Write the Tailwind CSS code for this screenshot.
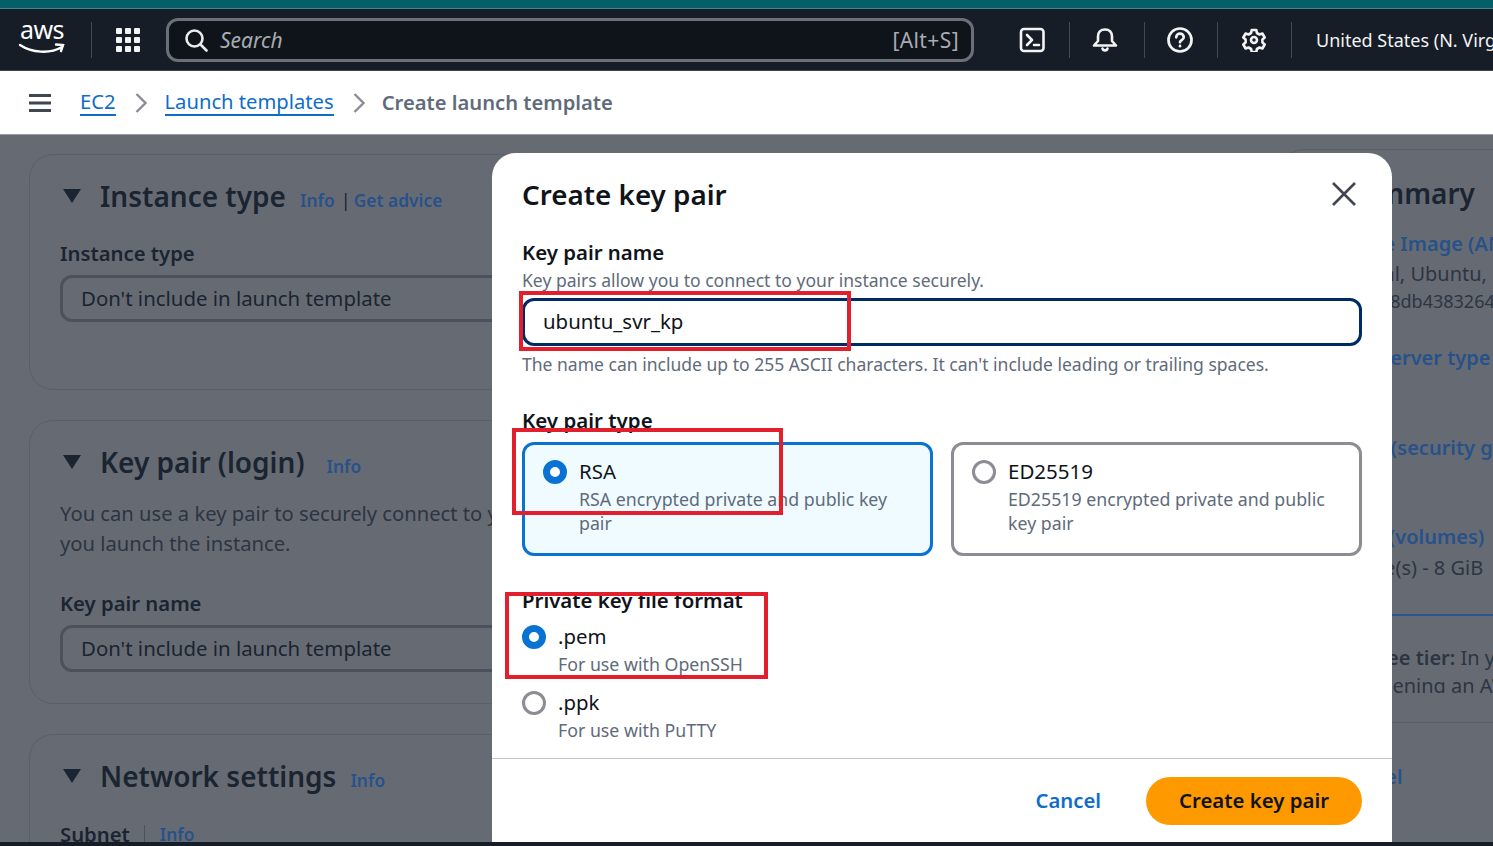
<!DOCTYPE html>
<html lang="en">
<head>
<meta charset="utf-8">
<title>Create launch template</title>
<script src="https://cdn.jsdelivr.net/npm/@tailwindcss/browser@4"></script>
</head>
<body class="relative h-[846px] w-[1493px] overflow-hidden bg-[#161d26] font-['Noto_Sans',sans-serif]">
<div class="h-[8px] bg-[#055f66]"></div>
<div class="h-[1px] bg-[#3f8a90]"></div>
<header class="flex h-[62px] items-center border-b border-[#414750] bg-[#161d26] text-white">
  <div class="flex w-[91px] shrink-0 flex-col items-center pr-[7px]">
    <span class="mt-[-8px] h-[26px] text-[25px] leading-[24px] tracking-[-0.5px] text-white">aws</span>
    <svg width="48" height="12" viewBox="0 0 48 12" fill="none" stroke="white" stroke-width="2.4" stroke-linecap="round"><path d="M2 2c12 8 30 9 42 2M38 1.500l7 .5-2 6"/></svg>
  </div>
  <div class="h-[36px] w-px shrink-0 bg-[#424750]"></div>
  <div class="ml-[24px] grid h-[24px] w-[24px] shrink-0 grid-cols-3 gap-[3px]">
    <i class="rounded-[1px] bg-[#f2f3f3]"></i><i class="rounded-[1px] bg-[#f2f3f3]"></i><i class="rounded-[1px] bg-[#f2f3f3]"></i>
    <i class="rounded-[1px] bg-[#f2f3f3]"></i><i class="rounded-[1px] bg-[#f2f3f3]"></i><i class="rounded-[1px] bg-[#f2f3f3]"></i>
    <i class="rounded-[1px] bg-[#f2f3f3]"></i><i class="rounded-[1px] bg-[#f2f3f3]"></i><i class="rounded-[1px] bg-[#f2f3f3]"></i>
  </div>
  <div class="ml-[26px] mt-[1px] flex h-[44px] w-[808px] shrink-0 items-center rounded-[12px] border-[3px] border-[#6b6f77] bg-[#0f141a] pl-[15px] pr-[12px]">
    <svg width="24" height="24" viewBox="0 0 24 24" fill="none" stroke="#e9ebed" stroke-width="2.600" stroke-linecap="round"><circle cx="10.500" cy="10.500" r="8"/><path d="M16.500 16.500l6 6"/></svg>
    <span class="ml-[12px] text-[21px] italic leading-[26px] text-[#a8acb2]">Search</span>
    <span class="ml-auto text-[21px] leading-[26px] tracking-[0.4px] text-[#a8acb2]">[Alt+S]</span>
  </div>
  <svg class="ml-[45px] shrink-0" width="28" height="26" viewBox="0 0 28 26" fill="none" stroke="#f2f3f3" stroke-width="2.600" stroke-linecap="round" stroke-linejoin="round"><rect x="2" y="2" width="22.500" height="22" rx="3"/><path d="M8 8l5 5-5 5M15 18h5"/></svg>
  <div class="ml-[22px] h-[36px] w-px shrink-0 bg-[#424750]"></div>
  <svg class="ml-[22px] shrink-0" width="26" height="26" viewBox="0 0 26 26" fill="none" stroke="#f2f3f3" stroke-width="2.600" stroke-linecap="round" stroke-linejoin="round"><path d="M13 2.500c-4.500 0-7 3-7 7v4.500l-4 4.500h22l-4-4.500v-4.500c0-4-2.500-7-7-7zM10.500 21.500c.5 2.500 4.500 2.500 5 0"/></svg>
  <div class="ml-[26px] h-[36px] w-px shrink-0 bg-[#424750]"></div>
  <svg class="ml-[21px] shrink-0" width="28" height="28" viewBox="0 0 26 26" fill="none" stroke="#f2f3f3" stroke-width="2.500" stroke-linecap="round" stroke-linejoin="round"><circle cx="13" cy="13" r="10.700"/><path d="M9.500 10.500c0-4.500 7-4.500 7 0 0 2.500-3.500 2.500-3.500 4.500"/><path d="M13 18.500v.2"/></svg>
  <div class="ml-[23px] h-[36px] w-px shrink-0 bg-[#424750]"></div>
  <svg class="ml-[24px] shrink-0" width="24" height="24" viewBox="0 0 24 24" fill="none" stroke="#f2f3f3" stroke-width="2.600" stroke-linecap="round" stroke-linejoin="round"><path d="M9.700 2h4.600l.6 3 2.600 1.500 2.900-1 2.300 4-2.300 2v3l2.300 2-2.300 4-2.900-1-2.600 1.500-.6 3H9.700l-.6-3-2.600-1.500-2.900 1-2.300-4 2.300-2v-3l-2.300-2 2.300-4 2.900 1L9.100 5z"/><circle cx="12" cy="12" r="3"/></svg>
  <div class="ml-[25px] h-[36px] w-px shrink-0 bg-[#424750]"></div>
  <span class="ml-[24px] whitespace-nowrap text-[18px] leading-[24px] text-[#f2f3f3]">United States (N. Virginia)</span>
</header>
<nav class="flex h-[63px] items-center bg-white pb-[2px] pl-[29px] text-[20.200px]">
  <svg class="mt-[3px]" width="22" height="18" viewBox="0 0 22 18" fill="none" stroke="#414750" stroke-width="3"><path d="M0 1.500h22M0 9h22M0 16.500h22"/></svg>
  <a class="ml-[29px] border-b-2 border-[#0f6dca] leading-[26px] text-[#0f6dca]">EC2</a>
  <svg class="ml-[19px] mt-[3px]" width="12" height="20" viewBox="0 0 12 20" fill="none" stroke="#8c8c94" stroke-width="2.400"><path d="M1.500 1l9 9-9 9"/></svg>
  <a class="ml-[18px] border-b-2 border-[#0f6dca] leading-[26px] text-[#0f6dca]">Launch templates</a>
  <svg class="ml-[19px] mt-[3px]" width="12" height="20" viewBox="0 0 12 20" fill="none" stroke="#8c8c94" stroke-width="2.400"><path d="M1.500 1l9 9-9 9"/></svg>
  <span class="ml-[17px] font-semibold leading-[26px] text-[#5f6b7a]">Create launch template</span>
</nav>
<main class="flex h-[708px] overflow-hidden border-t border-[#9a9da2] bg-[#666b73] text-[#1b2431]">
  <div class="w-[1270px] shrink-0 pl-[29px] pt-[19px]">
    <section class="h-[236px] rounded-[24px] border border-[#5a5f68] pl-[30px] pt-[22px]">
      <div class="flex items-center">
        <svg width="20" height="14" viewBox="0 0 20 14" class="ml-[2px] mr-[18px]"><path d="M1 0h18l-9 14z" fill="#1b2431"/></svg>
        <h2 class="text-[28px] font-semibold leading-[38px]">Instance type</h2>
        <span class="ml-[14px] mt-[7px] text-[17.400px] font-semibold leading-[24px] text-[#28518a]">Info</span>
        <span class="ml-[6px] mr-[3px] mt-[7px] text-[18px] leading-[24px]">|</span>
        <span class="mt-[7px] text-[17.400px] font-semibold leading-[24px] text-[#28518a]">Get advice</span>
      </div>
      <p class="mt-[26px] text-[20.300px] font-semibold leading-[24px]">Instance type</p>
      <div class="mt-[10px] flex h-[47px] items-center rounded-[12px] border-[3px] border-[#4c515b] pb-[2px] pl-[18px] text-[20.400px] leading-[26px]">Don't include in launch template</div>
    </section>
    <section class="mt-[30px] h-[284px] rounded-[24px] border border-[#5a5f68] pl-[30px] pt-[22px]">
      <div class="flex items-center">
        <svg width="20" height="14" viewBox="0 0 20 14" class="ml-[2px] mr-[18px]"><path d="M1 0h18l-9 14z" fill="#1b2431"/></svg>
        <h2 class="text-[28px] font-semibold leading-[38px]">Key pair (login)</h2>
        <span class="ml-[22px] mt-[7px] text-[17.400px] font-semibold leading-[24px] text-[#28518a]">Info</span>
      </div>
      <p class="mt-[17px] text-[20.200px] leading-[30px] text-[#2d3542]">You can use a key pair to securely connect to your instance. Ensure that you have access to the selected key pair before<br>you launch the instance.</p>
      <p class="mt-[33px] text-[20.300px] font-semibold leading-[24px]">Key pair name</p>
      <div class="mt-[10px] flex h-[47px] items-center rounded-[12px] border-[3px] border-[#4c515b] pb-[2px] pl-[18px] text-[20.400px] leading-[26px]">Don't include in launch template</div>
    </section>
    <section class="mt-[30px] h-[200px] rounded-t-[24px] border border-[#5a5f68] pl-[30px] pt-[22px]">
      <div class="flex items-center">
        <svg width="20" height="14" viewBox="0 0 20 14" class="ml-[2px] mr-[18px]"><path d="M1 0h18l-9 14z" fill="#1b2431"/></svg>
        <h2 class="text-[28px] font-semibold leading-[38px]">Network settings</h2>
        <span class="ml-[14px] mt-[7px] text-[17.400px] font-semibold leading-[24px] text-[#28518a]">Info</span>
      </div>
      <div class="mt-[26px] flex items-center">
        <span class="text-[20.300px] font-semibold leading-[26px]">Subnet</span>
        <span class="ml-[14px] h-[18px] w-px bg-[#4c515b]"></span>
        <span class="ml-[15px] text-[17.400px] font-semibold leading-[24px] text-[#28518a]">Info</span>
      </div>
    </section>
  </div>
  <aside class="ml-[10px] mt-[14px] w-[400px] shrink-0 rounded-tl-[24px] border-t border-[#5a5f68] pl-[30px] whitespace-nowrap">
    <h2 class="ml-[34px] mt-[24px] text-[28px] font-semibold leading-[38px]">Summary</h2>
    <p class="ml-[-2px] mt-[19px] text-[20px] font-semibold leading-[26px] text-[#28518a]">Software Image (AMI)</p>
    <p class="ml-[-2px] mt-[4px] text-[20px] leading-[26px] text-[#2d3542]">Canonical, Ubuntu, 24.04 LTS</p>
    <p class="ml-[-57px] mt-[3px] text-[18px] leading-[22px] text-[#2d3542]">ami-0e2c8caa4b8db43832640</p>
    <p class="mt-[33px] text-[20px] font-semibold leading-[26px] text-[#28518a]">Virtual server type</p>
    <p class="mt-[64px] text-[20px] font-semibold leading-[26px] text-[#28518a]">Firewall (security group)</p>
    <p class="ml-[-2px] mt-[63px] text-[20px] font-semibold leading-[26px] text-[#28518a]">Storage (volumes)</p>
    <p class="ml-[-1px] mt-[5px] text-[20px] leading-[26px] text-[#2d3542]">1 volume(s) - 8 GiB</p>
    <div class="mt-[33px] h-[2px] bg-[#2a5590]"></div>
    <div class="ml-[58px] mt-[28px] h-[49px] overflow-hidden text-[20px] leading-[28px] text-[#2d3542]"><p><b class="font-semibold">Free tier:</b> In your first year</p><p>opening an AWS account</p></div>
    <div class="mt-[29px] h-px bg-[#5a5f68]"></div>
    <p class="ml-[28px] mt-[41px] text-[20px] font-semibold leading-[26px] text-[#28518a]">Cancel</p>
  </aside>
</main>

<div role="dialog" class="absolute left-[492px] top-[153px] h-[689px] w-[900px] overflow-hidden rounded-t-[24px] bg-white text-[#0f141a]">
  <div class="px-[30px] pt-[23px]">
    <div class="flex items-center justify-between pr-[5px]">
      <h2 class="text-[27.800px] font-semibold leading-[36px]">Create key pair</h2>
      <svg width="26" height="26" viewBox="0 0 26 26" fill="none" stroke="#424650" stroke-width="2.600"><path d="M2 2l22 22M24 2L2 24"/></svg>
    </div>
    <p class="mt-[28px] text-[20.400px] font-semibold leading-[24px]">Key pair name</p>
    <p class="mt-[4px] text-[17.550px] leading-[24px] text-[#5f6b7a]">Key pairs allow you to connect to your instance securely.</p>
    <div class="mt-[6px] flex h-[48px] items-center rounded-[12px] border-[3px] border-[#002a66] pb-[2px] pl-[18px] text-[20.400px] leading-[26px]">ubuntu_svr_kp</div>
    <p class="mt-[6px] text-[17.550px] leading-[24px] text-[#5f6b7a]">The name can include up to 255 ASCII characters. It can't include leading or trailing spaces.</p>
    <p class="mt-[32px] text-[20.500px] font-semibold leading-[24px]">Key pair type</p>
    <div class="mt-[10px] grid grid-cols-2 gap-[18px]">
      <div class="flex h-[114px] gap-[12px] rounded-[12px] border-[3px] border-[#0972d3] bg-[#f0fbff] px-[18px] pt-[14px]">
        <span class="mt-[1px] h-[24px] w-[24px] shrink-0 rounded-full border-[7px] border-[#0972d3] bg-white"></span>
        <div class="pr-[20px]">
          <p class="text-[20.400px] leading-[24px]">RSA</p>
          <p class="mt-[4px] text-[17.750px] leading-[24px] text-[#5f6b7a]">RSA encrypted private and public key pair</p>
        </div>
      </div>
      <div class="flex h-[114px] gap-[12px] rounded-[12px] border-[3px] border-[#8c8c94] bg-white px-[18px] pt-[14px]">
        <span class="mt-[1px] h-[24px] w-[24px] shrink-0 rounded-full border-[3px] border-[#8c8c94] bg-white"></span>
        <div class="pr-[10px]">
          <p class="text-[20.500px] leading-[24px]">ED25519</p>
          <p class="mt-[4px] text-[17.750px] leading-[24px] text-[#5f6b7a]">ED25519 encrypted private and public key pair</p>
        </div>
      </div>
    </div>
    <p class="mt-[32px] text-[20.400px] font-semibold leading-[24px]">Private key file format</p>
    <div class="mt-[12px] flex gap-[12px]">
      <span class="mt-[1px] h-[24px] w-[24px] shrink-0 rounded-full border-[7px] border-[#0972d3] bg-white"></span>
      <div>
        <p class="text-[20.400px] leading-[24px]">.pem</p>
        <p class="mt-[4px] text-[17.750px] leading-[24px] text-[#5f6b7a]">For use with OpenSSH</p>
      </div>
    </div>
    <div class="mt-[14px] flex gap-[12px]">
      <span class="mt-[1px] h-[24px] w-[24px] shrink-0 rounded-full border-[3px] border-[#8c8c94] bg-white"></span>
      <div>
        <p class="text-[20.400px] leading-[24px]">.ppk</p>
        <p class="mt-[4px] text-[17.750px] leading-[24px] text-[#5f6b7a]">For use with PuTTY</p>
      </div>
    </div>
  </div>
  <div class="mt-[16px] flex items-center justify-end gap-[45px] border-t border-[#c6c6cd] px-[30px] pt-[18px]">
    <span class="pb-[2px] text-[20.300px] font-semibold leading-[26px] text-[#0f6dca]">Cancel</span>
    <button class="h-[48px] w-[216px] rounded-full bg-[#ff9900] pb-[2px] text-[20.400px] font-semibold leading-[26px] text-[#0f141a]">Create key pair</button>
  </div>
</div>

<div class="absolute left-[519px] top-[291px] h-[60px] w-[332px] border-[4px] border-[#e21f2c]"></div>
<div class="absolute left-[512px] top-[428px] h-[87px] w-[271px] border-[4px] border-[#e21f2c]"></div>
<div class="absolute left-[505px] top-[592px] h-[87px] w-[263px] border-[4px] border-[#e21f2c]"></div>
</body>
</html>
